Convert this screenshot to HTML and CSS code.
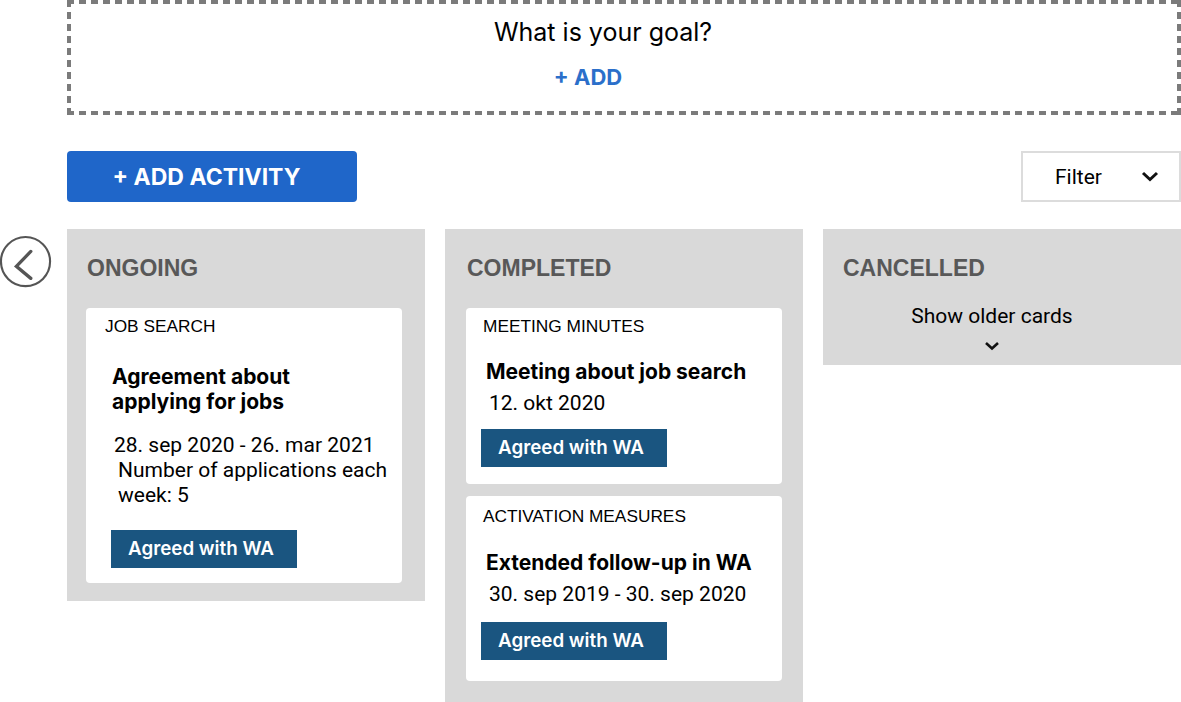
FILE: index.html
```html
<!DOCTYPE html>
<html lang="en">
<head>
    <meta charset="UTF-8">
    <meta name="viewport" content="width=device-width, initial-scale=1.0">
    <title>Activity plan</title>
    <link rel="stylesheet" href="styles.css">
</head>
<body>
    <div class="page">
        <section class="goal">
            <h2 class="goal-title">What is your goal?</h2>
            <a class="goal-add" href="#">+ ADD</a>
        </section>

        <div class="toolbar">
            <button class="btn-add">+ ADD ACTIVITY</button>
            <button class="filter">
                <span>Filter</span>
                <svg width="18" height="11" viewBox="0 0 18 11"><polyline points="2,2 9,8.5 16,2" fill="none" stroke="#111" stroke-width="3"/></svg>
            </button>
        </div>

        <div class="board">
            <button class="back" aria-label="Back">
                <svg width="54" height="56" viewBox="0 0 54 56"><circle cx="26.5" cy="27.5" r="25.5" fill="#fff" stroke="#555" stroke-width="2.2"/><polyline points="32,17 17,32.5 32,45" fill="none" stroke="#555" stroke-width="3.4" stroke-linecap="round" stroke-linejoin="miter"/></svg>
            </button>

            <div class="columns">
                <div class="column">
                    <h3 class="column-title">ONGOING</h3>
                    <div class="card">
                        <div class="card-label">JOB SEARCH</div>
                        <div class="card-body">
                            <div class="card-title">Agreement about<br>applying for jobs</div>
                            <div class="card-date">28. sep 2020 - 26. mar 2021</div>
                            <div class="card-note">Number of applications each week: 5</div>
                            <div class="badge">Agreed with WA</div>
                        </div>
                    </div>
                </div>

                <div class="column column--done">
                    <h3 class="column-title">COMPLETED</h3>
                    <div class="card card--compact">
                        <div class="card-label">MEETING MINUTES</div>
                        <div class="card-body">
                            <div class="card-title">Meeting about job search</div>
                            <div class="card-date">12. okt 2020</div>
                            <div class="badge">Agreed with WA</div>
                        </div>
                    </div>
                    <div class="card card--compact card--tall">
                        <div class="card-label">ACTIVATION MEASURES</div>
                        <div class="card-body">
                            <div class="card-title">Extended follow-up in WA</div>
                            <div class="card-date">30. sep 2019 - 30. sep 2020</div>
                            <div class="badge">Agreed with WA</div>
                        </div>
                    </div>
                </div>

                <div class="column column--short">
                    <h3 class="column-title">CANCELLED</h3>
                    <button class="older">
                        <span>Show older cards</span>
                        <svg width="16" height="10" viewBox="0 0 16 10"><polyline points="2,2 8,7.5 14,2" fill="none" stroke="#111" stroke-width="2.6"/></svg>
                    </button>
                </div>
            </div>
        </div>
    </div>
</body>
</html>
```

FILE: styles.css
```css
body {
    margin: 0;
    font-family: Roboto, "Liberation Sans", sans-serif;
    color: #000;
    background-color: #fff;
}
.page {
    width: 1181px;
    height: 702px;
    overflow: hidden;
}
button {
    font: inherit;
    border: none;
    background: none;
    padding: 0;
    cursor: pointer;
}

/* goal box with a hand-made dashed frame */
.goal {
    margin-left: 67px;
    height: 115px;
    box-sizing: border-box;
    padding: 17px 42px 0 0;
    display: flex;
    flex-direction: column;
    align-items: center;
    background:
        repeating-linear-gradient(90deg, #7b7b7b 0 7px, transparent 7px 12px) left top / 100% 4px no-repeat,
        repeating-linear-gradient(90deg, #7b7b7b 0 7px, transparent 7px 12px) left bottom / 100% 4px no-repeat,
        repeating-linear-gradient(180deg, #7b7b7b 0 7px, transparent 7px 12px) left top / 4px 100% no-repeat,
        repeating-linear-gradient(180deg, #7b7b7b 0 7px, transparent 7px 12px) right top / 4px 100% no-repeat;
}
.goal-title {
    margin: 0;
    font-family: Inter, sans-serif;
    font-weight: 400;
    font-size: 25px;
    line-height: 30px;
}
.goal-add {
    margin: 17px 30px 0 0;
    font-family: Inter, sans-serif;
    font-weight: 700;
    font-size: 22px;
    line-height: 26px;
    color: #2b6fca;
    text-decoration: none;
}

.toolbar {
    margin: 36px 0 0 67px;
    display: flex;
    justify-content: space-between;
}
.btn-add {
    width: 290px;
    height: 51px;
    padding-right: 11px;
    background-color: #1f66c9;
    border-radius: 4px;
    color: #fff;
    font-family: Inter, sans-serif;
    font-weight: 700;
    font-size: 23px;
}
.filter {
    width: 160px;
    height: 51px;
    box-sizing: border-box;
    border: 2px solid #dcdcdc;
    display: flex;
    align-items: center;
    padding: 0 20px 0 32px;
    justify-content: space-between;
    font-size: 21px;
    color: #000;
}

.board {
    margin-top: 27px;
    display: flex;
    align-items: flex-start;
}
.back {
    width: 52px;
    margin: 5px 15px 0 0;
    display: flex;
}
.columns {
    display: grid;
    grid-template-columns: repeat(3, 358px);
    gap: 20px;
    align-items: start;
}
.column {
    background-color: #d9d9d9;
    padding: 25px 23px 18px 19px;
}
.column-title {
    margin: 0 0 26px 1px;
    font-family: "Liberation Sans", Arial, sans-serif;
    font-weight: 700;
    font-size: 23px;
    line-height: 28px;
    color: #585858;
}
.card {
    background-color: #fff;
    border-radius: 4px;
    padding: 8px 0 15px 19px;
}
.card + .card {
    margin-top: 12px;
}
.card-label {
    font-family: "Liberation Sans", Arial, sans-serif;
    font-size: 17.3px;
    line-height: 20px;
}
.card-body {
    margin-top: 28px;
    padding-left: 6px;
}
.card-title {
    margin-left: 1px;
    font-family: Inter, sans-serif;
    font-weight: 700;
    font-size: 21px;
    line-height: 25px;
}
.card-date {
    margin: 19px 0 0 3px;
    font-size: 21px;
    line-height: 25px;
}
.card-note {
    margin-left: 7px;
    font-size: 21px;
    line-height: 25px;
}
.badge {
    margin-top: 22px;
    width: 186px;
    height: 38px;
    box-sizing: border-box;
    padding-left: 17px;
    background-color: #1a5580;
    color: #fff;
    font-family: Inter, sans-serif;
    font-weight: 600;
    font-size: 18.8px;
    line-height: 37px;
}

.column--done {
    padding-left: 21px;
    padding-right: 21px;
    padding-bottom: 21px;
}
.card--compact {
    padding-left: 17px;
    padding-bottom: 17px;
}
.card--compact .card-body {
    margin-top: 23px;
    padding-left: 0;
    margin-left: -2px;
}
.card--compact .card-title {
    margin-left: 5px;
}
.card--compact .card-date {
    margin: 7px 0 0 8px;
}
.card--compact .badge {
    margin-top: 13px;
}
.card--tall {
    padding-top: 10px;
    padding-bottom: 21px;
}
.card--tall .card-body {
    margin-top: 24px;
}
.card--tall .card-date {
    margin-top: 7px;
}
.card--tall .badge {
    margin-top: 15px;
}

.column--short {
    padding-bottom: 14px;
}
.column--short .column-title {
    margin-bottom: 22px;
}
.older {
    width: 100%;
    display: flex;
    flex-direction: column;
    align-items: center;
    font-size: 21px;
    line-height: 25px;
    color: #000;
    padding-right: 16px;
}
.older svg {
    margin-top: 12px;
}
```
